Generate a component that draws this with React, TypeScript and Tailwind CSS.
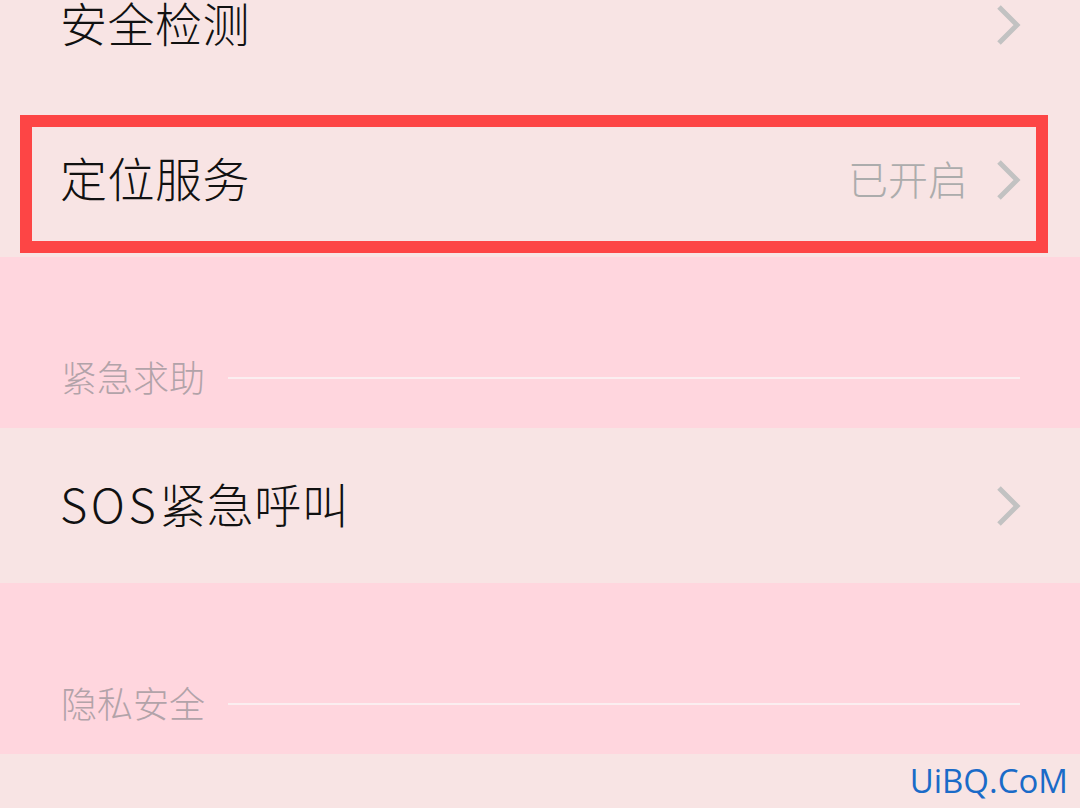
import React from 'react';

const CJK = '"Noto Sans CJK SC", "Noto Sans", sans-serif';

function Chevron() {
  return (
    <svg width="26" height="42" viewBox="0 0 26 42" className="shrink-0">
      <polyline points="3,3 21,21 3,39" fill="none" stroke="#c2c2c2" strokeWidth="5" strokeLinejoin="miter" />
    </svg>
  );
}

function Row({ label, value, className = '', children }: { label: React.ReactNode; value?: string; className?: string; children?: React.ReactNode }) {
  return (
    <div className={`relative h-[155px] flex items-center pl-[60px] pr-[58px] bg-[#f8e4e4] ${className}`}>
      <span className="text-[47px] font-light tracking-[0.5px] text-[#111111] leading-none flex-1 -mt-[6px]">{label}</span>
      {value && <span className="text-[40px] font-light text-[#acacac] leading-none mr-[28px] -mt-[4px]">{value}</span>}
      <Chevron />
      {children}
    </div>
  );
}

function SectionHeader({ title }: { title: string }) {
  return (
    <div className="h-[171px] bg-[#ffd6de] flex items-end pl-[61px] pr-[60px] pb-[30px]">
      <div className="flex items-center w-full h-[40px]">
        <span className="text-[36px] font-light text-[#b2a3a9] leading-none -mt-[4px]">{title}</span>
        <div className="flex-1 h-[2px] bg-[#fbeef0] ml-[23px]" />
      </div>
    </div>
  );
}

export default function App() {
  return (
    <div className="w-[1080px] h-[808px] overflow-hidden bg-[#f8e4e4]" style={{ fontFamily: CJK }}>
      <Row label="安全检测" className="-mt-[53px]" />
      <Row label="定位服务" value="已开启">
        <div className="absolute left-[20px] right-[32px] top-[13px] bottom-[4px] border-[12px] border-[#fd4545]" />
      </Row>
      <SectionHeader title="紧急求助" />
      <Row label={<><span className="tracking-[3.5px]">SOS</span>紧急呼叫</>} />
      <SectionHeader title="隐私安全" />
      <div className="h-[55px] flex items-center justify-end pr-[12px]">
        <span className="text-[33px] text-[#1a6bc8] leading-none -mt-[2px]" style={{ fontFamily: '"Open Sans", sans-serif' }}>UiBQ.CoM</span>
      </div>
    </div>
  );
}
